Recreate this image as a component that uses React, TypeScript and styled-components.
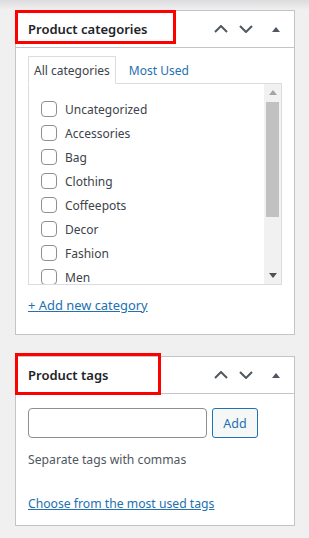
import React from 'react';
import styled, { createGlobalStyle } from 'styled-components';

const Global = createGlobalStyle`
  html, body { margin: 0; padding: 0; }
  body {
    background: #f0f0f1 linear-gradient(#dcdcde, #f0f0f1) no-repeat;
    background-size: 100% 10px;
    font-family: "Noto Sans", "Open Sans", sans-serif;
    color: #3c434a;
  }
`;

const Page = styled.div`
  display: flex;
  flex-direction: column;
  gap: 21px;
  width: 280px;
  padding: 10px 14px 12px 15px;
`;

const Panel = styled.section<{ $h: number }>`
  position: relative;
  box-sizing: border-box;
  height: ${p => p.$h}px;
  background: #fff;
  border: 1px solid #c3c4c7;
`;

const Highlight = styled.div<{ $top: number; $w: number; $h: number }>`
  position: absolute;
  left: -1px;
  top: ${p => p.$top}px;
  width: ${p => p.$w}px;
  height: ${p => p.$h}px;
  box-sizing: border-box;
  border: 3px solid #ff0000;
  pointer-events: none;
`;

const Header = styled.div`
  display: flex;
  align-items: center;
  height: 36px;
  border-bottom: 1px solid #c3c4c7;
  padding-left: 12px;
`;

const Title = styled.h2`
  flex: 1;
  margin: 0;
  font-size: 13px;
  font-weight: 600;
  color: #1d2327;
`;

const IconButton = styled.button<{ $w: number }>`
  display: flex;
  align-items: center;
  justify-content: center;
  width: ${p => p.$w}px;
  height: 36px;
  padding: 0;
  border: 0;
  background: transparent;
  color: #50575e;
`;

const Body = styled.div<{ $pad: string }>`
  padding: ${p => p.$pad};
`;

const TabBar = styled.div`
  display: flex;
  align-items: flex-end;
  height: 28px;
  margin-bottom: -1px;
  position: relative;
  z-index: 1;
`;

const Tab = styled.div<{ $active?: boolean }>`
  box-sizing: border-box;
  height: 28px;
  line-height: 27px;
  font-size: 12px;
  padding: ${p => (p.$active ? '0 5px' : '0 12px')};
  color: ${p => (p.$active ? '#3c434a' : '#2271b1')};
  background: ${p => (p.$active ? '#fff' : 'transparent')};
  border: 1px solid ${p => (p.$active ? '#dcdcde' : 'transparent')};
  border-bottom-color: ${p => (p.$active ? '#fff' : 'transparent')};
`;

const ListBox = styled.div`
  display: flex;
  box-sizing: border-box;
  height: 202px;
  border: 1px solid #dcdcde;
  background: #fff;
`;

const List = styled.ul`
  flex: 1;
  margin: 0;
  padding: 13px 0 0 12px;
  list-style: none;
  overflow: hidden;
`;

const Item = styled.li`
  display: flex;
  align-items: center;
  gap: 8px;
  height: 24px;
  font-size: 12px;
  color: #3c434a;
`;

const Check = styled.input`
  appearance: none;
  margin: 0;
  width: 16px;
  height: 16px;
  box-sizing: border-box;
  border: 1px solid #8c8f94;
  border-radius: 4px;
  background: #fff;
`;

const ScrollTrack = styled.div`
  display: flex;
  flex-direction: column;
  width: 17px;
  background: #f1f1f1;
`;

const ScrollArrow = styled.div`
  display: flex;
  align-items: center;
  justify-content: center;
  height: 17px;
`;

const Thumb = styled.div`
  height: 115px;
  margin: 1px 2px 0;
  background: #c1c1c1;
`;

const Spacer = styled.div`
  flex: 1;
`;

const Link = styled.a<{ $size: number; $mt: number }>`
  display: inline-block;
  margin-top: ${p => p.$mt}px;
  font-size: ${p => p.$size}px;
  line-height: 18px;
  color: #2271b1;
  text-decoration: underline;
`;

const TagRow = styled.div`
  display: flex;
  gap: 5px;
`;

const TagInput = styled.input`
  box-sizing: border-box;
  width: 179px;
  height: 30px;
  border: 1px solid #8c8f94;
  border-radius: 4px;
  background: #fff;
`;

const AddButton = styled.button`
  box-sizing: border-box;
  width: 46px;
  height: 30px;
  border: 1px solid #2271b1;
  border-radius: 3px;
  background: #f6f7f7;
  color: #2271b1;
  font-family: inherit;
  font-size: 12.5px;
  padding: 0;
`;

const Hint = styled.p`
  margin: 13px 0 0;
  font-size: 12.2px;
  line-height: 18px;
  color: #50575e;
`;

const Up = () => (
  <svg width="14" height="8" viewBox="0 0 14 8">
    <path d="M1 7 L7 1 L13 7" fill="none" stroke="currentColor" strokeWidth="2" />
  </svg>
);
const Down = () => (
  <svg width="14" height="8" viewBox="0 0 14 8">
    <path d="M1 1 L7 7 L13 1" fill="none" stroke="currentColor" strokeWidth="2" />
  </svg>
);
const Tri = ({ down, color }: { down?: boolean; color: string }) => (
  <svg width="8" height="5" viewBox="0 0 8 5">
    <polygon points={down ? '0,0 8,0 4,5' : '0,5 4,0 8,5'} fill={color} />
  </svg>
);

const HeaderBar = ({ title }: { title: string }) => (
  <Header>
    <Title>{title}</Title>
    <IconButton $w={25}><Up /></IconButton>
    <IconButton $w={25}><Down /></IconButton>
    <IconButton $w={36}><Tri color="#50575e" /></IconButton>
  </Header>
);

const cats = ['Uncategorized', 'Accessories', 'Bag', 'Clothing', 'Coffeepots', 'Decor', 'Fashion', 'Men'];

export default function App() {
  return (
    <>
      <Global />
      <Page>
        <Panel $h={325}>
          <HeaderBar title="Product categories" />
          <Highlight $top={-1} $w={161} $h={34} />
          <Body $pad="8px 12px 20px">
            <TabBar>
              <Tab $active>All categories</Tab>
              <Tab>Most Used</Tab>
            </TabBar>
            <ListBox>
              <List>
                {cats.map(c => (
                  <Item key={c}>
                    <Check type="checkbox" />
                    <span>{c}</span>
                  </Item>
                ))}
              </List>
              <ScrollTrack>
                <ScrollArrow><Tri color="#a3a3a3" /></ScrollArrow>
                <Thumb />
                <Spacer />
                <ScrollArrow><Tri down color="#505050" /></ScrollArrow>
              </ScrollTrack>
            </ListBox>
            <Link href="#" $size={12.9} $mt={11}>+ Add new category</Link>
          </Body>
        </Panel>
        <Panel $h={170}>
          <HeaderBar title="Product tags" />
          <Highlight $top={-4} $w={146} $h={42} />
          <Body $pad="14px 12px 12px">
            <TagRow>
              <TagInput type="text" />
              <AddButton>Add</AddButton>
            </TagRow>
            <Hint>Separate tags with commas</Hint>
            <Link href="#" $size={12.2} $mt={26}>Choose from the most used tags</Link>
          </Body>
        </Panel>
      </Page>
    </>
  );
}
